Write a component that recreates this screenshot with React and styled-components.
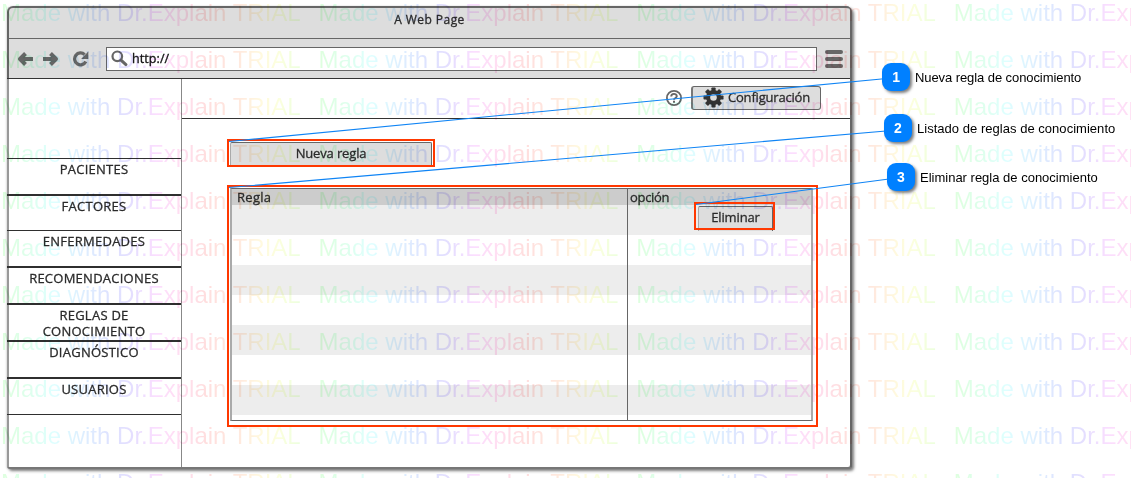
import React from "react";
import styled, { createGlobalStyle } from "styled-components";

const GlobalStyle = createGlobalStyle`
  * { box-sizing: border-box; }
  body { margin: 0; background: #fff; overflow: hidden; }
`;

const Page = styled.div`
  position: relative;
  width: 1131px;
  height: 478px;
  padding: 6px 0 0 7px;
  overflow: hidden;
  background: #fff;
  color: #2b2b2b;
  font-family: "Open Sans", "Noto Sans", sans-serif;
  font-size: 13px;
  font-weight: 500;
`;

const BrowserWindow = styled.div`
  display: flex;
  flex-direction: column;
  width: 845px;
  height: 463px;
  border-radius: 6px 6px 4px 3px;
  border-right: 2px solid #666;
  border-bottom: 2px solid #777;
  box-shadow: 2px 2px 3px rgba(0, 0, 0, 0.5), -1px 0 2px rgba(0, 0, 0, 0.12);
  background: #fff;
  -webkit-text-stroke: 0.3px currentColor;
`;

const Chrome = styled.div`
  height: 72px;
  background: #ddd;
  border-top: 2px solid #666;
  border-left: 2px solid #666;
  border-radius: 6px 4px 0 0;
`;

const TitleBar = styled.div`
  height: 31px;
  padding-top: 3px;
  border-bottom: 1px solid #666;
  text-align: center;
  line-height: 18px;
  font-size: 12px;
  letter-spacing: 0.45px;
`;

const Toolbar = styled.div`
  display: flex;
  align-items: center;
  height: 39px;
  padding: 0 7px 0 8px;
  color: #666;
`;

const NavIcons = styled.div`
  display: flex;
  align-items: center;
  gap: 8px;
  width: 89px;
`;

const AddressBar = styled.div`
  display: flex;
  align-items: center;
  gap: 4px;
  width: 712px;
  height: 24px;
  padding-left: 4px;
  background: #fff;
  border: 1px solid #666;
  color: #111;
  font-size: 12.5px;
  line-height: 22px;
  letter-spacing: 0.1px;
`;

const Menu = styled.div`
  display: flex;
  flex-direction: column;
  gap: 3px;
  width: 18px;
  margin-left: 8px;
`;

const MenuBar = styled.span`
  height: 4px;
  border-radius: 2px;
  background: #666;
`;

const Body = styled.div`
  display: flex;
  flex: 1;
  border-top: 1px solid #333;
`;

const Sidebar = styled.nav`
  width: 175px;
  padding-top: 79px;
  background: linear-gradient(90deg, #999 2px, transparent 2px);
  border-right: 1px solid #888;
`;

const NavItem = styled.div`
  display: flex;
  justify-content: center;
  height: ${(p) => p.$height}px;
  padding-top: 2px;
  border-top: ${(p) => p.$line}px solid #2f2f2f;
  text-align: center;
  line-height: 16px;
  white-space: pre-line;
  letter-spacing: 0.25px;
`;

const Main = styled.main`
  flex: 1;
`;

const Header = styled.header`
  display: flex;
  justify-content: flex-end;
  align-items: center;
  gap: 9px;
  height: 40px;
  padding: 0 29px 2px 0;
  border-bottom: 1px solid #333;
`;

const ConfigButton = styled.button`
  display: flex;
  align-items: center;
  gap: 4px;
  width: 130px;
  height: 24px;
  padding: 0 0 1px 10px;
  border: 1px solid #666;
  border-left: 2px solid #777;
  border-radius: 3px;
  background: #ddd;
  color: #2b2b2b;
  font: inherit;
  letter-spacing: -0.2px;
`;

const Content = styled.section`
  padding: 23px 0 0 48px;
`;

const FlatButton = styled.button`
  display: block;
  width: ${(p) => p.$width}px;
  height: 25px;
  padding: 0 0 4px;
  border: solid #666;
  border-width: 1px 1px 0 1px;
  border-left-color: #aaa;
  border-radius: 2px 2px 0 0;
  background: #ddd;
  color: #2b2b2b;
  font: inherit;
  letter-spacing: -0.15px;
`;

const Table = styled.div`
  display: grid;
  grid-template-columns: 396px 183px;
  width: 583px;
  height: 233px;
  margin-top: 21px;
  border: solid #aaa;
  border-width: 1px 2px;
  border-top-color: #666;
  border-bottom-color: #666;
  background: linear-gradient(#ccc 0 16px, transparent 16px),
    repeating-linear-gradient(#ededed 0 30px, #fff 30px 60px) 0 16px / 100% 210px no-repeat;
`;

const Column = styled.div`
  padding-left: ${(p) => p.$pad}px;
  border-right: ${(p) => (p.$divided ? "1px solid #666" : "0")};
`;

const ColumnTitle = styled.div`
  height: 17px;
  line-height: 17px;
  letter-spacing: ${(p) => p.$spacing}px;
`;

const RowAction = styled.div`
  padding-left: 68px;
`;

const Watermark = styled.div`
  position: absolute;
  top: -1px;
  left: 1px;
  width: 1400px;
  pointer-events: none;
  mix-blend-mode: multiply;
`;

const WatermarkRow = styled.div`
  display: flex;
  height: 47px;
`;

const WatermarkText = styled.span`
  flex: none;
  width: 317.6px;
  height: 32px;
  font: 400 24px/27px "Liberation Sans", Arial, sans-serif;
  white-space: nowrap;
  color: transparent;
  background: linear-gradient(90deg, #deffde 0, #deffee 30px, #deffff 52px, #deedff 85px, #dee2ff 110px, #e5deff 132px, #fbdeff 155px, #ffdef4 175px, #ffdede 205px, #ffeade 240px, #fff9de 260px, #fbffde 278px, #edffde 298px);
  -webkit-background-clip: text;
  background-clip: text;
`;

const Highlight = styled.div`
  position: absolute;
  left: ${(p) => p.$x}px;
  top: ${(p) => p.$y}px;
  width: ${(p) => p.$w}px;
  height: ${(p) => p.$h}px;
  border: 2px solid #ff3800;
`;

const Connectors = styled.svg`
  position: absolute;
  inset: 0;
  width: 1131px;
  height: 478px;
  stroke: #0f84f5;
  stroke-width: 1.1;
`;

const Callout = styled.div`
  position: absolute;
  left: ${(p) => p.$x}px;
  top: ${(p) => p.$y}px;
  display: flex;
  align-items: center;
  gap: 5px;
  color: #000;
  font: 400 13px/15px "Liberation Sans", Arial, sans-serif;
  letter-spacing: ${(p) => p.$spacing}px;
  white-space: nowrap;
`;

const Badge = styled.span`
  width: 28px;
  height: 28px;
  border-radius: 9px;
  background: #0080ff;
  box-shadow: 2px 2px 3px rgba(0, 0, 0, 0.5);
  color: #fff;
  font-weight: 700;
  font-size: 14px;
  line-height: 29px;
  text-align: center;
`;

const navItems = [
  { label: "PACIENTES", height: 36, line: 1 },
  { label: "FACTORES", height: 36, line: 2 },
  { label: "ENFERMEDADES", height: 36, line: 1 },
  { label: "RECOMENDACIONES", height: 37, line: 2 },
  { label: "REGLAS DE\nCONOCIMIENTO", height: 37, line: 2 },
  { label: "DIAGNÓSTICO", height: 37, line: 2 },
  { label: "USUARIOS", height: 37, line: 2 },
  { label: "", height: 20, line: 1 },
];

const highlights = [
  { x: 227, y: 139, w: 208, h: 28 },
  { x: 227, y: 185, w: 591, h: 242 },
  { x: 694, y: 202, w: 81, h: 28 },
];

const callouts = [
  { n: 1, x: 882, y: 63, spacing: -0.08, from: [229, 141.5], to: [884, 78.7], label: "Nueva regla de conocimiento" },
  { n: 2, x: 884, y: 114, spacing: 0.03, from: [229, 187.5], to: [886, 131], label: "Listado de reglas de conocimiento" },
  { n: 3, x: 887, y: 163, spacing: 0, from: [696, 204.5], to: [889, 179], label: "Eliminar regla de conocimiento" },
];

function Arrow({ flip }) {
  return (
    <svg width="17" height="16" viewBox="0 0 17 16">
      <path
        d={flip ? "M8.5 2.5 14 8l-5.5 5.5M13.5 8H1" : "M8.5 2.5 3 8l5.5 5.5M3.5 8H16"}
        fill="none"
        stroke="#666"
        strokeWidth="4"
        strokeLinejoin="round"
      />
    </svg>
  );
}

function Reload() {
  return (
    <svg width="22" height="16" viewBox="-5.5 0 22 16">
      <path d="M12.1 3.6A5.9 5.9 0 1 0 13.3 10.5" fill="none" stroke="#666" strokeWidth="3.3" />
      <path d="M15.8.6V8H8.6Z" fill="#666" />
    </svg>
  );
}

function Search() {
  return (
    <svg width="17" height="17" viewBox="0 0 17 17">
      <circle cx="6.3" cy="6.3" r="4.8" fill="none" stroke="#666" strokeWidth="2.2" />
      <path d="m10.3 10.3 4.6 4.3" stroke="#666" strokeWidth="3" strokeLinecap="round" />
    </svg>
  );
}

function Help() {
  return (
    <svg width="17" height="17" viewBox="-0.5 -0.5 17 17" fill="none" stroke="#666">
      <circle cx="8.5" cy="8.5" r="7.1" strokeWidth="1.8" />
      <path d="M5.7 7C5.7 3.6 11.3 3.6 11.3 6.8 11.3 8.4 8.5 8.5 8.5 10.2" strokeWidth="1.9" />
      <path d="M8.5 11.2v2" strokeWidth="2" />
    </svg>
  );
}

function Gear() {
  return (
    <svg width="21" height="21" viewBox="0 0 21 21">
      {[0, 45, 90, 135].map((a) => (
        <rect key={a} x="8.4" y="0.5" width="4.2" height="20" rx="0.8" fill="#333" transform={`rotate(${a} 10.5 10.5)`} />
      ))}
      <circle cx="10.5" cy="10.5" r="7.5" fill="#333" />
      <circle cx="10.5" cy="10.5" r="3.3" fill="#ddd" />
    </svg>
  );
}

export default function App() {
  return (
    <>
      <GlobalStyle />
      <Page>
        <BrowserWindow>
          <Chrome>
            <TitleBar>A Web Page</TitleBar>
            <Toolbar>
              <NavIcons>
                <Arrow />
                <Arrow flip />
                <Reload />
              </NavIcons>
              <AddressBar>
                <Search />
                http://
              </AddressBar>
              <Menu>
                <MenuBar />
                <MenuBar />
                <MenuBar />
              </Menu>
            </Toolbar>
          </Chrome>
          <Body>
            <Sidebar>
              {navItems.map((item) => (
                <NavItem key={item.label} $height={item.height} $line={item.line}>
                  {item.label}
                </NavItem>
              ))}
            </Sidebar>
            <Main>
              <Header>
                <Help />
                <ConfigButton>
                  <Gear />
                  Configuración
                </ConfigButton>
              </Header>
              <Content>
                <FlatButton $width={202}>Nueva regla</FlatButton>
                <Table>
                  <Column $pad={5} $divided>
                    <ColumnTitle $spacing={0.3}>Regla</ColumnTitle>
                  </Column>
                  <Column $pad={2}>
                    <ColumnTitle $spacing={-0.3}>opción</ColumnTitle>
                    <RowAction>
                      <FlatButton $width={75}>Eliminar</FlatButton>
                    </RowAction>
                  </Column>
                </Table>
              </Content>
            </Main>
          </Body>
        </BrowserWindow>
        <Watermark aria-hidden="true">
          {Array.from({ length: 11 }, (_, row) => (
            <WatermarkRow key={row}>
              {Array.from({ length: 4 }, (_, col) => (
                <WatermarkText key={col}>Made with Dr.Explain TRIAL</WatermarkText>
              ))}
            </WatermarkRow>
          ))}
        </Watermark>
        {highlights.map((h) => (
          <Highlight key={h.y} $x={h.x} $y={h.y} $w={h.w} $h={h.h} />
        ))}
        <Connectors>
          {callouts.map(({ n, from, to }) => (
            <line key={n} x1={from[0]} y1={from[1]} x2={to[0]} y2={to[1]} />
          ))}
        </Connectors>
        {callouts.map((c) => (
          <Callout key={c.n} $x={c.x} $y={c.y} $spacing={c.spacing}>
            <Badge>{c.n}</Badge>
            {c.label}
          </Callout>
        ))}
      </Page>
    </>
  );
}
